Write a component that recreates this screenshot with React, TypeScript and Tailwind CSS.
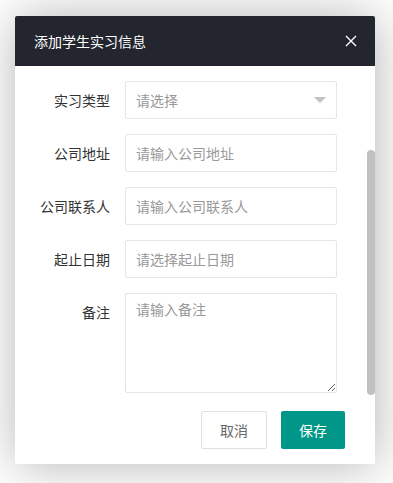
import React from "react";

const font = { fontFamily: '"Noto Sans CJK SC", "Noto Sans", sans-serif' };

function Row({ label, children }: { label: string; children: React.ReactNode }) {
  return (
    <div className="flex mb-[15px]">
      <div className="w-[110px] shrink-0 pr-[15px] text-right text-[14px] leading-[20px] pt-[9px] text-[#333]">{label}</div>
      {children}
    </div>
  );
}

const inputCls =
  "w-[212px] h-[38px] border border-[#e6e6e6] rounded-[2px] pl-[10px] text-[14px] text-[#333] placeholder:text-[#999] outline-none bg-white";

export default function App() {
  return (
    <div className="w-[393px] h-[483px] bg-white pt-[16px] pl-[15px]" style={font}>
      <div className="w-[360px] h-[448px] bg-white shadow-[1px_1px_50px_rgba(0,0,0,0.3)] rounded-[2px] flex flex-col overflow-hidden">
        <div className="h-[50px] shrink-0 bg-[#23262e] flex items-center justify-between pl-[19px] pr-[18px]">
          <span className="text-white text-[14px]">添加学生实习信息</span>
          <svg width="12" height="12" viewBox="0 0 12 12" className="mt-[-1px]">
            <path d="M1 1 L11 11 M11 1 L1 11" stroke="#fff" strokeWidth="1.4" />
          </svg>
        </div>
        <div className="flex flex-1 min-h-0">
          <div className="flex-1 pt-[15px]">
            <Row label="实习类型">
              <div className="relative w-[212px] h-[38px] border border-[#e6e6e6] rounded-[2px] bg-white flex items-center pl-[10px] text-[14px] text-[#999]">
                请选择
                <span className="absolute right-[10px] top-[15px] w-0 h-0 border-l-[6px] border-r-[6px] border-t-[6px] border-l-transparent border-r-transparent border-t-[#c2c2c2]" />
              </div>
            </Row>
            <Row label="公司地址">
              <input className={inputCls} placeholder="请输入公司地址" />
            </Row>
            <Row label="公司联系人">
              <input className={inputCls} placeholder="请输入公司联系人" />
            </Row>
            <Row label="起止日期">
              <input className={inputCls} placeholder="请选择起止日期" />
            </Row>
            <div className="flex">
              <div className="w-[110px] shrink-0 pr-[15px] text-right text-[14px] leading-[20px] pt-[9px] text-[#333]">备注</div>
              <textarea
                className="w-[212px] h-[100px] border border-[#e6e6e6] rounded-[2px] px-[10px] pt-[5px] text-[14px] leading-[20px] text-[#333] placeholder:text-[#999] outline-none bg-white"
                placeholder="请输入备注"
              />
            </div>
            <div className="flex justify-end pr-[22px] mt-[18px] gap-[14px]">
              <button className="h-[38px] px-[18px] border border-[#e0e0e0] rounded-[2px] bg-white text-[14px] text-[#666]">取消</button>
              <button className="h-[38px] px-[18px] rounded-[2px] bg-[#009688] text-[14px] text-white">保存</button>
            </div>
          </div>
          <div className="w-[8px] shrink-0">
            <div className="mt-[84px] h-[245px] bg-[#c1c1c1] rounded-t-[4px] rounded-b-[4px]" />
          </div>
        </div>
      </div>
    </div>
  );
}
